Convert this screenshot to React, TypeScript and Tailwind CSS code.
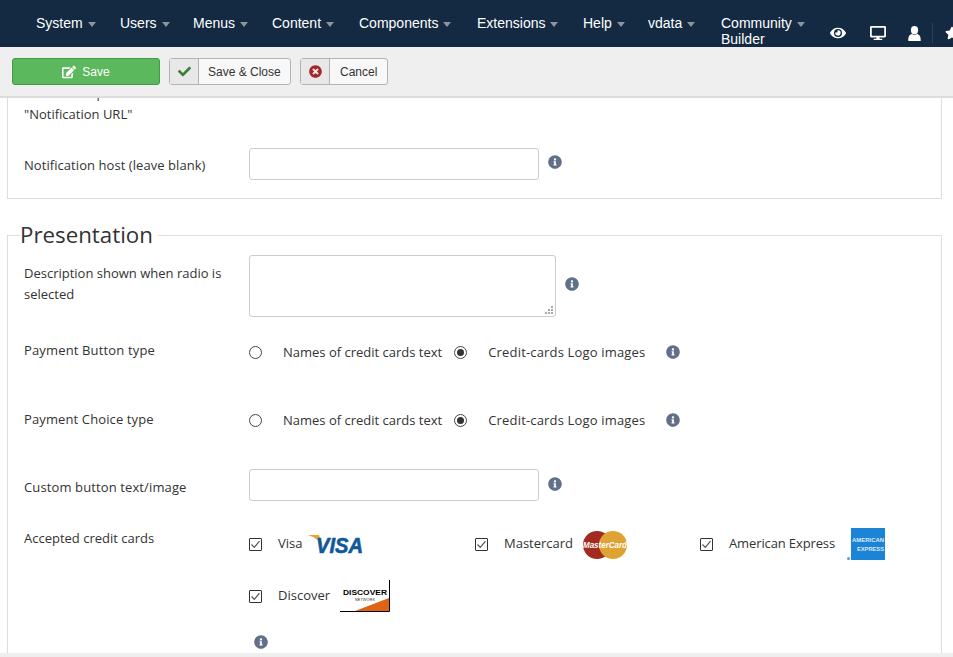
import { ReactNode } from "react"
import { FaCheck, FaDesktop, FaEdit, FaEye, FaInfoCircle, FaStar, FaTimesCircle } from "react-icons/fa"

const menu = [
  { label: "System", width: "w-[84px]" },
  { label: "Users", width: "w-[73px]" },
  { label: "Menus", width: "w-[79px]" },
  { label: "Content", width: "w-[87px]" },
  { label: "Components", width: "w-[118px]" },
  { label: "Extensions", width: "w-[106px]" },
  { label: "Help", width: "w-[65px]" },
  { label: "vdata", width: "w-[73px]" },
]

function Caret() {
  return <span className="ml-[5px] mt-[2px] h-0 w-0 border-x-[4.5px] border-t-[5px] border-x-transparent border-t-[#8b95a1]" />
}

function Info({ className = "" }: { className?: string }) {
  return <FaInfoCircle className={`text-[14px] text-[#5f7088] ${className}`} />
}

function Checkbox() {
  return (
    <span className="flex h-[13px] w-[13px] shrink-0 items-center justify-center rounded-[1px] border border-[#333] bg-white">
      <svg viewBox="0 0 11 11" className="h-[11px] w-[11px]">
        <path d="M1.5 5.5 L4.3 8.3 L9.5 2.2" fill="none" stroke="#555" strokeWidth="1.2" />
      </svg>
    </span>
  )
}

function Radio({ checked }: { checked?: boolean }) {
  return (
    <span className="flex h-[13px] w-[13px] shrink-0 items-center justify-center rounded-full border border-[#444] bg-white">
      {checked && <span className="h-[7px] w-[7px] rounded-full bg-[#333]" />}
    </span>
  )
}

function Row({ label, className = "", children }: { label: ReactNode; className?: string; children: ReactNode }) {
  return (
    <div className={`flex ${className}`}>
      <div className="w-[225px] shrink-0 pr-4">{label}</div>
      {children}
    </div>
  )
}

function RadioRow({ className }: { className: string }) {
  return (
    <div className={`flex h-[21px] items-center ${className}`}>
      <Radio />
      <span className="ml-[21px]">Names of credit cards text</span>
      <span className="ml-[12px]"><Radio checked /></span>
      <span className="ml-[21px] tracking-[0.17px]">Credit-cards Logo images</span>
      <Info className="ml-[21px]" />
    </div>
  )
}

function UserIcon() {
  return (
    <svg viewBox="0 0 13 15" className="h-[15px] w-[13px]" fill="currentColor">
      <ellipse cx="6.5" cy="4.2" rx="3.6" ry="4.2" />
      <path d="M0.3 15 C0 10.5 1.5 8.5 4 8 C5.5 9.2 7.5 9.2 9 8 C11.5 8.5 13 10.5 12.7 15 Z" />
    </svg>
  )
}

function VisaLogo() {
  return (
    <svg viewBox="0 0 55 24" className="h-[24px] w-[55px]">
      <path d="M0 2 H11 L15 14 C12 8 7 4.5 0 2 Z" fill="#e8a52e" />
      <text x="8" y="20" fontFamily="Liberation Sans" fontSize="22" fontWeight="700" fontStyle="italic" fill="#10589c" stroke="#10589c" strokeWidth="0.6" textLength="47" lengthAdjust="spacingAndGlyphs">VISA</text>
    </svg>
  )
}

function MastercardLogo() {
  return (
    <svg viewBox="0 0 46 30" className="h-[30px] w-[46px]">
      <circle cx="15" cy="15" r="14" fill="#a32a20" />
      <circle cx="31" cy="15" r="14" fill="#dfa333" />
      <path d="M23 4 H26 M21 7 H25 M20 10 H27 M20 20 H27 M21 23 H25 M23 26 H26" stroke="#dfa333" strokeWidth="1" />
      <text x="1" y="18" fontFamily="Liberation Sans" fontSize="9" fontWeight="700" fontStyle="italic" fill="#fff" textLength="44" lengthAdjust="spacingAndGlyphs">MasterCard</text>
    </svg>
  )
}

function AmexLogo() {
  return (
    <svg viewBox="0 0 38 33" className="h-[33px] w-[38px]">
      <circle cx="1.5" cy="30.5" r="1.5" fill="#5b9ad6" />
      <rect x="4" y="0" width="34" height="32" fill="#1b84d6" />
      <text x="5" y="14" fontFamily="Liberation Sans" fontSize="6" fontWeight="700" fill="#dcecf8" textLength="32" lengthAdjust="spacingAndGlyphs">AMERICAN</text>
      <text x="10" y="23" fontFamily="Liberation Sans" fontSize="6" fontWeight="700" fill="#dcecf8" textLength="27" lengthAdjust="spacingAndGlyphs">EXPRESS</text>
    </svg>
  )
}

function DiscoverLogo() {
  return (
    <svg viewBox="0 0 50 32" className="h-[32px] w-[50px]">
      <rect width="50" height="32" fill="#fff" />
      <path d="M15 31 L49 18 V31 Z" fill="#dc6414" />
      <path d="M0 31.5 H49.5 V0" fill="none" stroke="#000" strokeWidth="1" />
      <text x="3" y="15" fontFamily="Liberation Sans" fontSize="8" fontWeight="700" fill="#000" textLength="44" lengthAdjust="spacingAndGlyphs">DISCOVER</text>
      <text x="15" y="21" fontFamily="Liberation Sans" fontSize="3" fill="#333" textLength="20" lengthAdjust="spacingAndGlyphs">NETWORK</text>
    </svg>
  )
}

function Card({ name, children, gap }: { name: string; children: ReactNode; gap: string }) {
  return (
    <div className="flex items-center">
      <Checkbox />
      <span className={`ml-[16px] pb-[2px] ${gap}`}>{name}</span>
      {children}
    </div>
  )
}

export default function App() {
  return (
    <div className="flex h-[657px] w-[953px] flex-col overflow-hidden bg-white font-['Open_Sans',sans-serif] text-[13px] leading-[21px] text-[#333]">
      <nav className="flex h-[47px] shrink-0 items-start overflow-hidden bg-[#132a42] pl-[36px] pt-[13px] font-['Liberation_Sans',sans-serif] text-[14px] leading-[20px] text-white">
        {menu.map((item) => (
          <div key={item.label} className={`flex shrink-0 items-center ${item.width}`}>
            {item.label}
            <Caret />
          </div>
        ))}
        <div className="mt-[2px] w-[109px] shrink-0 leading-[16px]">
          <div className="flex items-center">
            Community
            <Caret />
          </div>
          <div>Builder</div>
        </div>
        <div className="flex shrink-0 items-center pt-[10px]">
          <FaEye className="text-[16px]" />
          <FaDesktop className="ml-[24px] text-[16px]" />
          <span className="ml-[22px]"><UserIcon /></span>
          <div className="ml-[11px] h-[20px] w-px bg-[#2e4257]" />
          <FaStar className="ml-[12px] text-[14px]" />
        </div>
      </nav>

      <div className="flex h-[51px] shrink-0 items-start gap-[9px] border-b-2 border-[#ddd] bg-[#efefef] pl-[12px] pt-[11px] font-['Liberation_Sans',sans-serif] text-[12px]">
        <button className="flex h-[27px] w-[148px] items-center justify-center rounded-[3px] border border-[#3f9b46] bg-[#5cb85c] text-white">
          <FaEdit className="mr-[6px] text-[14px]" />
          <span className="pt-px">Save</span>
        </button>
        <button className="flex h-[27px] w-[122px] items-center rounded-[3px] border border-[#b3b3b3] bg-[#f8f8f8] text-[#333]">
          <span className="flex h-full w-[29px] items-center justify-center border-r border-[#b3b3b3] bg-[#e8e8e8]">
            <FaCheck className="text-[13px] text-[#378137]" />
          </span>
          <span className="ml-[9px] pt-px">Save &amp; Close</span>
        </button>
        <button className="flex h-[27px] w-[88px] items-center rounded-[3px] border border-[#b3b3b3] bg-[#f8f8f8] text-[#333]">
          <span className="flex h-full w-[29px] items-center justify-center border-r border-[#b3b3b3] bg-[#e8e8e8]">
            <FaTimesCircle className="text-[13px] text-[#a8262b]" />
          </span>
          <span className="ml-[10px] pt-px">Cancel</span>
        </button>
      </div>

      <main className="min-h-0 flex-1 overflow-hidden">
        <div className="-mt-[16px] ml-[7px] mr-[11px] border border-t-0 border-[#ddd] px-[16px] pb-[18px] pt-[1px]">
          <div className="pl-[6px]">To be set up as</div>
          <div>"Notification URL"</div>
          <Row label={<div className="pt-[7px] tracking-[0.06px]">Notification host (leave blank)</div>} className="mt-[23px]">
            <input className="h-[32px] w-[290px] rounded-[3px] border border-[#ccc] bg-white" />
            <Info className="ml-[9px] mt-[7px]" />
          </Row>
        </div>

        <fieldset className="ml-[7px] mr-[11px] mt-[18px] border border-[#ddd] px-[16px] pb-[20px]">
          <legend className="-ml-[4px] pr-[5px] text-[22.3px] leading-[36px]">Presentation</legend>
          <Row
            label={
              <div className="pt-[8px]">
                Description shown when radio is selected
              </div>
            }
            className="mt-[2px]"
          >
            <div className="relative h-[62px] w-[307px]">
              <textarea className="block h-full w-full resize-none rounded-[3px] border border-[#ccc] bg-white" />
              <svg viewBox="0 0 8 8" className="absolute bottom-[3px] right-[3px] h-[8px] w-[8px]" fill="#aaa">
                <path d="M6 0h2v2H6zM3 3h2v2H3zM6 3h2v2H6zM0 6h2v2H0zM3 6h2v2H3zM6 6h2v2H6z" />
              </svg>
            </div>
            <Info className="ml-[9px] mt-[22px]" />
          </Row>
          <Row label={<span className="tracking-[0.15px]">Payment Button type</span>} className="mt-[23px]">
            <RadioRow className="pt-[3px]" />
          </Row>
          <Row label={<span className="tracking-[0.12px]">Payment Choice type</span>} className="mt-[48px]">
            <RadioRow className="pt-[1px]" />
          </Row>
          <Row label={<div className="pt-[8px] tracking-[0.12px]">Custom button text/image</div>} className="mt-[39px]">
            <input className="h-[32px] w-[290px] rounded-[3px] border border-[#ccc] bg-white" />
            <Info className="ml-[9px] mt-[8px]" />
          </Row>
          <Row label="Accepted credit cards" className="mt-[27px]">
            <div className="w-[676px]">
              <div className="grid grid-cols-[226px_225px_225px]">
                <Card name="Visa" gap="mr-[6px]"><VisaLogo /></Card>
                <Card name="Mastercard" gap="mr-[9px]"><MastercardLogo /></Card>
                <Card name="American Express" gap="mr-[12px] tracking-[-0.12px]"><AmexLogo /></Card>
              </div>
              <div className="mt-[19px]">
                <Card name="Discover" gap="mr-[10px]"><DiscoverLogo /></Card>
              </div>
              <Info className="ml-[5px] mt-[23px]" />
            </div>
          </Row>
        </fieldset>
      </main>

      <div className="h-[4px] shrink-0 bg-[#eee]" />
    </div>
  )
}
